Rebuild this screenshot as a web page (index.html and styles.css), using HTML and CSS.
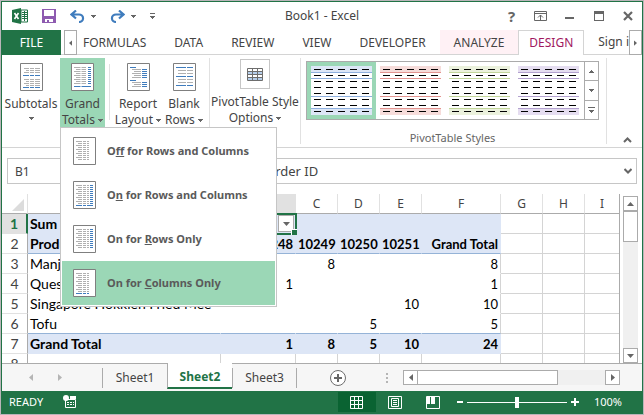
FILE: index.html
```html
<!DOCTYPE html>
<html lang="en">
<head>
    <meta charset="UTF-8">
    <meta name="viewport" content="width=device-width, initial-scale=1.0">
    <title>Book1 - Excel</title>
    <link rel="stylesheet" href="styles.css">
</head>
<body>

    <!-- shared icon shapes -->
    <svg class="defs" aria-hidden="true">
        <symbol id="swatch" viewBox="0 0 61 49">
            <path class="band" d="M0 0h61v6H0zM0 43h61v6H0z"/>
            <path class="rule" d="M0 6.500h61M0 12.500h61M0 30.500h61M0 42.500h61"/>
            <path class="dash" d="M3 3.500h58M3 9.500h58M3 15.500h58M3 21.500h58M3 27.500h58M3 33.500h58M3 39.500h58M3 45.500h58"/>
        </symbol>
        <symbol id="down" viewBox="0 0 5 3"><path d="M0 0h5v1H4v1H3v1H2V2H1V1H0z"/></symbol>
        <symbol id="left" viewBox="0 0 4 7"><path d="M4 0v7L0 3.500z"/></symbol>
        <symbol id="right" viewBox="0 0 4 7"><path d="M0 0v7l4-3.500z"/></symbol>
        <symbol id="page" viewBox="0 0 23 28"><path d="M.5.5h22v27H.5z" fill="#fff" stroke="#7f7f7f"/></symbol>
    </svg>

    <div class="window">
        <header class="titlebar">
            <div class="quick">
                <svg width="16" height="16" viewBox="0 0 16 16">
                    <path d="M9 2h6.500v12H9z" fill="#fff" stroke="#217346"/>
                    <path d="M10 4.500h5M10 6.500h5M10 8.500h5M10 10.500h5M12.500 3v10" stroke="#217346"/>
                    <path d="M0 2l9-2v16l-9-2z" fill="#217346"/>
                    <path d="M2.500 5l4 6M6.500 5l-4 6" stroke="#fff" stroke-width="1.600"/>
                </svg>
                <button class="icon" aria-label="Save">
                    <svg width="14" height="14" viewBox="0 0 14 14">
                        <path d="M0 0h14v14H0z" fill="#8e5bb0"/>
                        <path d="M2 1h10v6H2zM3 10h8v3H3z" fill="#fff"/>
                        <path d="M5 11h2v2H5z" fill="#8e5bb0"/>
                    </svg>
                </button>
                <button class="icon history" aria-label="Undo">
                    <svg width="15" height="13" viewBox="0 0 15 13"><path d="M6 .5L1.500 4.500 6 8.500M2 4.500h7a4 3.700 0 0 1 0 7.500" fill="none" stroke="#3f7cbd" stroke-width="2.200"/></svg>
                    <svg class="arrow" width="5" height="3"><use href="#down"/></svg>
                </button>
                <button class="icon history" aria-label="Redo">
                    <svg width="15" height="13" viewBox="0 0 15 13"><path d="M9 .5l4.500 4L9 8.500M13 4.500H6A4 3.700 0 0 0 6 12" fill="none" stroke="#3f7cbd" stroke-width="2.200"/></svg>
                    <svg class="arrow" width="5" height="3"><use href="#down"/></svg>
                </button>
                <button class="icon" aria-label="Customize">
                    <svg width="5" height="6" viewBox="0 0 5 6"><path d="M0 0h5v1H0zM0 3h5v1H4v1H3v1H2V5H1V4H0z"/></svg>
                </button>
            </div>
            <h1>Book1 - Excel</h1>
            <div class="controls">
                <button class="icon" aria-label="Help"><span class="help">?</span></button>
                <button class="icon" aria-label="Ribbon options">
                    <svg width="13" height="10" viewBox="0 0 13 10"><path d="M.5.5h12v9H.5zM.5 2.500h12M6.500 4v5M4 6.500L6.500 4 9 6.500" fill="none" stroke="#666"/></svg>
                </button>
                <button class="icon" aria-label="Minimize"><svg width="9" height="10" viewBox="0 0 9 10"><path d="M0 6h9v2H0z"/></svg></button>
                <button class="icon" aria-label="Maximize"><svg width="10" height="10" viewBox="0 0 10 10"><path d="M0 0h10v10H0zM1 3v6h8V3z" fill-rule="evenodd"/></svg></button>
                <button class="icon" aria-label="Close"><svg width="10" height="10" viewBox="0 0 10 10"><path d="M1 1l8 8M9 1L1 9" stroke="#666" stroke-width="2.200"/></svg></button>
            </div>
        </header>

        <nav class="tabs">
            <button class="file">FILE</button>
            <button class="tab-scroll" aria-label="Scroll tabs left"><svg width="3" height="6"><use href="#left"/></svg></button>
            <button class="tab">FORMULAS</button>
            <button class="tab">DATA</button>
            <button class="tab">REVIEW</button>
            <button class="tab">VIEW</button>
            <button class="tab">DEVELOPER</button>
            <button class="tab analyze">ANALYZE</button>
            <button class="tab design">DESIGN</button>
            <a class="signin" href="#">Sign in</a>
            <button class="tab-scroll" aria-label="Scroll tabs right"><svg width="3" height="6"><use href="#right"/></svg></button>
        </nav>

        <section class="ribbon">
            <div class="group layout">
                <button class="tool wide">
                    <svg width="23" height="28" viewBox="0 0 23 28"><use href="#page"/>
                        <path class="g" d="M4 5.500h16M6 7.500h14M4 9.500h16M4 16.500h16M6 18.500h14M4 20.500h16M6 22.500h14"/>
                        <path class="b" d="M3 12.500h17M3 24.500h17"/><path class="w" d="M9.500 4v21M14.500 4v21"/>
                    </svg>
                    <span>Subtotals</span>
                    <svg class="arrow" width="5" height="3"><use href="#down"/></svg>
                </button>
                <div class="dropdown">
                    <button class="tool open">
                        <svg width="23" height="28" viewBox="0 0 23 28"><use href="#page"/>
                            <path class="g" d="M3 4.500h12M5 6.500h10M3 8.500h12M5 10.500h10M3 12.500h12M5 14.500h10M3 16.500h12M5 18.500h10M3 20.500h12"/>
                            <path class="b" d="M3 23.500h17M17 4.500h3M17 6.500h3M17 8.500h3M17 10.500h3M17 12.500h3M17 14.500h3M17 16.500h3M17 18.500h3M17 20.500h3"/><path class="w" d="M10 3v22"/>
                        </svg>
                        <span>Grand<br>Totals <svg class="arrow" width="5" height="3"><use href="#down"/></svg></span>
                    </button>
                    <div class="menu">
                        <button>
                            <svg width="23" height="28" viewBox="0 0 23 28"><use href="#page"/>
                                <path class="g" d="M3 4.500h13M5 6.500h11M3 8.500h13M5 10.500h11M3 12.500h13M5 14.500h11M3 16.500h13M5 18.500h11M3 20.500h13M5 22.500h11"/><path class="w" d="M9.500 3v21M13.500 3v21"/>
                            </svg>
                            <span>O<u>f</u>f for Rows and Columns</span>
                        </button>
                        <button>
                            <svg width="23" height="28" viewBox="0 0 23 28"><use href="#page"/>
                                <path class="g" d="M3 4.500h13M5 6.500h11M3 8.500h13M5 10.500h11M3 12.500h13M5 14.500h11M3 16.500h13M5 18.500h11M3 20.500h13M5 22.500h11"/>
                                <path class="b" d="M3 24.500h17M17 4.500h3M17 6.500h3M17 8.500h3M17 10.500h3M17 12.500h3M17 14.500h3M17 16.500h3M17 18.500h3M17 20.500h3M17 22.500h3"/><path class="w" d="M9.500 3v22M13.500 3v22"/>
                            </svg>
                            <span>O<u>n</u> for Rows and Columns</span>
                        </button>
                        <button>
                            <svg width="23" height="28" viewBox="0 0 23 28"><use href="#page"/>
                                <path class="g" d="M3 4.500h13M5 6.500h11M3 8.500h13M5 10.500h11M3 12.500h13M5 14.500h11M3 16.500h13M5 18.500h11M3 20.500h13M5 22.500h11"/>
                                <path class="b" d="M17 4.500h3M17 6.500h3M17 8.500h3M17 10.500h3M17 12.500h3M17 14.500h3M17 16.500h3M17 18.500h3M17 20.500h3M17 22.500h3"/><path class="w" d="M9.500 3v21M13.500 3v21"/>
                            </svg>
                            <span>On for <u>R</u>ows Only</span>
                        </button>
                        <button class="current">
                            <svg width="23" height="28" viewBox="0 0 23 28"><use href="#page"/>
                                <path class="g" d="M3 4.500h13M5 6.500h11M3 8.500h13M5 10.500h11M3 12.500h13M5 14.500h11M3 16.500h13M5 18.500h11M3 20.500h13M5 22.500h11"/>
                                <path class="b" d="M3 24.500h13"/><path class="w" d="M9.500 3v22M13.500 3v22"/>
                            </svg>
                            <span>On for <u>C</u>olumns Only</span>
                        </button>
                    </div>
                </div>
                <i class="divider"></i>
                <button class="tool">
                    <svg width="23" height="28" viewBox="0 0 23 28"><use href="#page"/>
                        <path class="b" d="M3 4.500h6M3 17.500h6M15 6.500h5M15 8.500h5M15 10.500h5M15 12.500h5M15 14.500h5M15 19.500h5M15 21.500h5M15 23.500h5"/>
                        <path class="g" d="M5 6.500h9M7 8.500h7M5 10.500h9M7 12.500h7M5 14.500h9M5 19.500h9M7 21.500h7M5 23.500h9"/>
                    </svg>
                    <span>Report<br>Layout <svg class="arrow" width="5" height="3"><use href="#down"/></svg></span>
                </button>
                <button class="tool">
                    <svg width="23" height="28" viewBox="0 0 23 28"><use href="#page"/>
                        <path class="b" d="M3 4.500h17M3 13.500h17M3 22.500h17"/>
                        <path class="g" d="M5 7.500h15M5 10.500h15M5 16.500h15M5 19.500h15"/><path class="w" d="M13.500 3v21"/>
                    </svg>
                    <span>Blank<br>Rows <svg class="arrow" width="5" height="3"><use href="#down"/></svg></span>
                </button>
            </div>
            <div class="group options">
                <button class="tool">
                    <i class="tile"><svg width="16" height="13" viewBox="0 0 16 13">
                        <path d="M0 0h16v13H0z" fill="#fff"/><path d="M0 3h16v3H0zM0 9h16v3H0z" fill="#b4cdea"/>
                        <path d="M.5.5h15v12H.5zM0 3.500h16M0 6.500h16M0 9.500h16M5.500 0v13M10.500 0v13" fill="none" stroke="#6d6d6d"/>
                    </svg></i>
                    <span>PivotTable Style<br>Options <svg class="arrow" width="5" height="3"><use href="#down"/></svg></span>
                </button>
            </div>
            <div class="group styles">
                <div class="gallery">
                    <button class="style blue chosen" aria-label="Light blue"><svg width="61" height="49"><use href="#swatch"/></svg></button>
                    <button class="style red" aria-label="Light red"><svg width="61" height="49"><use href="#swatch"/></svg></button>
                    <button class="style green" aria-label="Light green"><svg width="61" height="49"><use href="#swatch"/></svg></button>
                    <button class="style purple" aria-label="Light purple"><svg width="61" height="49"><use href="#swatch"/></svg></button>
                    <div class="gallery-nav">
                        <button aria-label="Row up"><svg class="flip" width="5" height="3"><use href="#down"/></svg></button>
                        <button aria-label="Row down"><svg width="5" height="3"><use href="#down"/></svg></button>
                        <button aria-label="More styles"><svg width="7" height="6" viewBox="0 0 7 6"><path d="M0 0h7v1H0zM1 3h5v1H5v1H4v1H3V5H2V4H1z"/></svg></button>
                    </div>
                </div>
                <p>PivotTable Styles</p>
            </div>
            <button class="icon collapse" aria-label="Collapse ribbon"><svg width="9" height="6" viewBox="0 0 9 6"><path d="M1 5l3.500-3.500L8 5" fill="none" stroke="#666" stroke-width="2"/></svg></button>
        </section>

        <div class="formula">
            <input class="name-box" type="text" value="B1" aria-label="Name box">
            <div class="entry">
                <input type="text" value="Order ID" aria-label="Formula bar">
                <button class="icon" aria-label="Expand formula bar"><svg width="8" height="6" viewBox="0 0 8 6"><path d="M.5 1L4 4.500 7.500 1" fill="none" stroke="#666" stroke-width="2"/></svg></button>
            </div>
        </div>

        <main class="sheet">
            <div class="grid">
                <table>
                    <colgroup><col class="c-num"><col class="c-a"><col class="c-b"><col class="c-n"><col class="c-n"><col class="c-n"><col class="c-f"><col class="c-n"><col class="c-n"><col></colgroup>
                    <thead>
                        <tr><th class="corner"><svg width="12" height="12" viewBox="0 0 12 12"><path d="M12 0v12H0z" fill="#dcdcdc"/></svg></th><th>A</th><th class="on">B</th><th>C</th><th>D</th><th>E</th><th>F</th><th>G</th><th>H</th><th>I</th></tr>
                    </thead>
                    <tbody>
                        <tr class="pivot"><th class="on">1</th><td>Sum of Quantity</td><td class="active">Order ID<button class="filter" aria-label="Filter"><svg width="7" height="4" viewBox="0 0 7 4"><path d="M0 0h7L3.500 4z"/></svg></button></td><td></td><td></td><td></td><td></td><td></td><td></td><td></td></tr>
                        <tr class="pivot line"><th>2</th><td>Product</td><td>10248</td><td>10249</td><td>10250</td><td>10251</td><td>Grand Total</td><td></td><td></td><td></td></tr>
                        <tr><th>3</th><td>Manjimup Dried Apples</td><td></td><td>8</td><td></td><td></td><td>8</td><td></td><td></td><td></td></tr>
                        <tr><th>4</th><td>Queso Cabrales</td><td>1</td><td></td><td></td><td></td><td>1</td><td></td><td></td><td></td></tr>
                        <tr><th>5</th><td>Singapore Hokkien Fried Mee</td><td></td><td></td><td></td><td>10</td><td>10</td><td></td><td></td><td></td></tr>
                        <tr class="line"><th>6</th><td>Tofu</td><td></td><td></td><td>5</td><td></td><td>5</td><td></td><td></td><td></td></tr>
                        <tr class="pivot"><th>7</th><td>Grand Total</td><td>1</td><td>8</td><td>5</td><td>10</td><td>24</td><td></td><td></td><td></td></tr>
                        <tr class="blank"><th>8</th><td></td><td></td><td></td><td></td><td></td><td></td><td></td><td></td><td></td></tr>
                    </tbody>
                </table>
            </div>
            <div class="vscroll">
                <button aria-label="Scroll up"><svg class="flip" width="7" height="4" viewBox="0 0 7 4"><path d="M0 0h7L3.500 4z"/></svg></button>
                <i class="thumb"></i>
                <button class="end" aria-label="Scroll down"><svg width="7" height="4" viewBox="0 0 7 4"><path d="M0 0h7L3.500 4z"/></svg></button>
            </div>
        </main>

        <div class="sheetbar">
            <div class="sheet-nav">
                <button class="icon" aria-label="Previous sheet"><svg width="4" height="7"><use href="#left"/></svg></button>
                <button class="icon" aria-label="Next sheet"><svg width="4" height="7"><use href="#right"/></svg></button>
            </div>
            <button class="sheet-tab">Sheet1</button>
            <button class="sheet-tab selected">Sheet2</button>
            <button class="sheet-tab last">Sheet3</button>
            <button class="icon add" aria-label="New sheet"><svg width="16" height="16" viewBox="0 0 16 16"><circle cx="8" cy="8" r="7.500" fill="#fff" stroke="#6d6d6d"/><path d="M7 4h2v3h3v2H9v3H7V9H4V7h3z"/></svg></button>
            <svg class="grip" width="2" height="10" viewBox="0 0 2 10"><path d="M0 0h2v2H0zM0 4h2v2H0zM0 8h2v2H0z" fill="#b5b5b5"/></svg>
            <div class="hscroll">
                <button aria-label="Scroll left"><svg width="4" height="7"><use href="#left"/></svg></button>
                <i class="thumb"></i>
                <button class="end" aria-label="Scroll right"><svg width="4" height="7"><use href="#right"/></svg></button>
            </div>
        </div>

        <footer class="status">
            <span>READY</span>
            <button class="icon macro" aria-label="Record macro"><svg width="14" height="14" viewBox="0 0 14 14"><path d="M2.500 4.500h10v8h-10z" fill="none" stroke="#fff"/><path d="M7 1h6v3H7z" fill="#fff"/><path d="M4 7.500h7M4 9.500h7" stroke="#fff" stroke-dasharray="2 1"/><circle cx="3" cy="3" r="3" fill="#fff"/></svg></button>
            <div class="views">
                <button class="on" aria-label="Normal"><svg width="13" height="13" viewBox="0 0 13 13"><path d="M.5.5h12v12H.5zM4.500 0v13M8.500 0v13M0 4.500h13M0 8.500h13" fill="none" stroke="#fff"/></svg></button>
                <button aria-label="Page layout"><svg width="14" height="13" viewBox="0 0 14 13"><path d="M.5.5h13v12H.5zM3.500 2.500h7v8h-7zM5 4.500h4M5 6.500h4M5 8.500h4" fill="none" stroke="#fff"/></svg></button>
                <button aria-label="Page break"><svg width="14" height="13" viewBox="0 0 14 13"><path d="M.5.5h13v12H.5z" fill="none" stroke="#fff"/><path d="M1 1h3v7H1zM5 1h4v7H5z" fill="#fff"/></svg></button>
            </div>
            <div class="zoom">
                <button aria-label="Zoom out"><svg width="6" height="2"><path d="M0 0h6v2H0z" fill="#fff"/></svg></button>
                <input type="range" min="0" max="100" value="50" aria-label="Zoom">
                <button aria-label="Zoom in"><svg width="8" height="8"><path d="M0 3h8v2H0zM3 0h2v8H3z" fill="#fff"/></svg></button>
            </div>
            <span class="percent">100%</span>
        </footer>
    </div>

</body>
</html>
```
FILE: styles.css
```css
* {
    box-sizing: border-box;
}

body {
    margin: 0;
    padding: 1px;
    height: 100vh;
    background-color: #b9b5b9;
    font-family: "Noto Sans", "Open Sans", sans-serif;
    font-size: 12px;
    line-height: 16px;
    color: #444444;
    display: flex;
}

button,
input {
    font: inherit;
    color: inherit;
    background: none;
    border: none;
    border-radius: 0;
    margin: 0;
    padding: 0;
    min-width: 0;
}

svg {
    display: block;
    flex-shrink: 0;
    fill: #666666;
}

.defs {
    position: absolute;
    width: 0;
    height: 0;
}

.window {
    flex: 1;
    min-width: 0;
    display: flex;
    flex-direction: column;
    background-color: #ffffff;
    border: 1px solid #217346;
}

.icon {
    display: flex;
    align-items: center;
    justify-content: center;
}

.arrow {
    display: inline-block;
    vertical-align: middle;
}

.flip {
    transform: rotate(180deg);
}

/* title bar */
.titlebar {
    display: grid;
    grid-template-columns: 1fr auto 1fr;
    align-items: center;
    height: 28px;
}

.titlebar h1 {
    margin: 0;
    font-size: 12px;
    font-weight: normal;
}

.quick {
    display: flex;
    align-items: center;
    gap: 14px;
    padding-left: 10px;
}

.history {
    gap: 6px;
}

.controls {
    display: flex;
    justify-content: flex-end;
}

.controls .icon {
    width: 29px;
    height: 24px;
}

.help {
    font-size: 15px;
    font-weight: bold;
    color: #666666;
}

/* ribbon tabs */
.tabs {
    display: flex;
    height: 25px;
    box-shadow: inset 0 -1px #d4d4d4;
}

.file {
    width: 59px;
    background-color: #217346;
    color: #ffffff;
    margin-right: 3px;
}

.tab {
    padding: 0 14px;
}

.tab-scroll {
    width: 13px;
    flex-shrink: 0;
    background-color: #ffffff;
    border: 1px solid #ababab;
    display: flex;
    align-items: center;
    justify-content: center;
}

.tab-scroll + .tab {
    padding-left: 6px;
}

.analyze {
    padding-top: 1px;
    background-color: #fff1f5;
    border-bottom: 1px solid #d4d4d4;
}

.tab.design {
    padding: 0 10px;
    color: #a0185f;
    background-color: #ffffff;
    border: 1px solid #d4d4d4;
    border-bottom: none;
}

.signin {
    flex: 1;
    min-width: 0;
    overflow: hidden;
    white-space: nowrap;
    padding: 4px 0 0 14px;
    color: inherit;
    text-decoration: none;
}

/* ribbon */
.ribbon {
    display: flex;
    height: 93px;
    padding-top: 3px;
    border-bottom: 1px solid #d4d4d4;
}

.group {
    display: flex;
    height: 86px;
    border-right: 1px solid #e1e1e1;
}

.tool {
    display: flex;
    flex-direction: column;
    align-items: center;
    width: 46px;
    height: 69px;
    padding-top: 5px;
    white-space: nowrap;
    gap: 5px;
}

.wide {
    width: 58px;
}

.tool.open {
    width: 45px;
    background-color: #9bd7b6;
}

.g { stroke: #b0b0b0; }
.b { stroke: #3f7cbd; }
.w { stroke: #ffffff; }

.divider {
    width: 1px;
    height: 56px;
    margin: 6px 5px 0 4px;
    background-color: #e1e1e1;
}

.layout {
    width: 208px;
}

.options .tool {
    width: 90px;
    padding-top: 1px;
    gap: 5px;
}

.tile {
    display: flex;
    align-items: center;
    justify-content: center;
    width: 30px;
    height: 30px;
    border: 1px solid #c6c6c6;
}

.styles {
    flex-direction: column;
    padding: 3px 7px 0 5px;
}

.styles p {
    margin: 0;
    padding-top: 11px;
    font-size: 11px;
    line-height: 14px;
    text-align: center;
    color: #666666;
}

.gallery {
    display: flex;
    height: 60px;
    border: 1px solid #ababab;
}

.style {
    display: flex;
    padding: 4px;
    color: #ffffff;
}

.chosen {
    background-color: #9bd7b6;
}

.style svg {
    background-color: #ffffff;
}

.band { fill: var(--band); }
.rule { stroke: var(--rule); }

.dash {
    stroke: #000000;
    stroke-dasharray: 7 5;
}

.blue { --band: #dce6f6; --rule: #8fb0de; }
.red { --band: #f6dcda; --rule: #e39490; }
.green { --band: #ebf1dc; --rule: #c2d69a; }
.purple { --band: #e5ddf0; --rule: #b3a2cf; }

.gallery-nav {
    display: flex;
    flex-direction: column;
    width: 14px;
    margin-left: 1px;
    border-left: 1px solid #ababab;
}

.gallery-nav button {
    flex: 1;
    display: flex;
    align-items: center;
    justify-content: center;
}

.gallery-nav button + button {
    border-top: 1px solid #ababab;
}

.collapse {
    margin: auto 10px 4px auto;
}

/* grand totals menu */
.dropdown {
    position: relative;
}

.menu {
    position: absolute;
    top: 100%;
    left: 0;
    margin-top: -17px;
    z-index: 2;
    width: 217px;
    padding: 1px;
    background-color: #ffffff;
    border: 1px solid #c6c6c6;
}

.menu button {
    display: flex;
    align-items: center;
    gap: 11px;
    width: 100%;
    height: 44px;
    padding-left: 11px;
    font-size: 11px;
    font-weight: bold;
    color: #5a5a5a;
    white-space: nowrap;
}

.menu .current {
    background-color: #9bd7b6;
}

/* formula bar */
.formula {
    display: flex;
    gap: 8px;
    padding: 10px 5px 0;
}

.name-box {
    width: 120px;
    height: 26px;
    padding-left: 7px;
    border: 1px solid #c6c6c6;
}

.entry {
    flex: 1;
    display: flex;
    height: 26px;
    margin-left: 100px;
    padding: 0 4px 0 29px;
    border: 1px solid #c6c6c6;
}

.entry input {
    flex: 1;
    font-size: 13px;
}

/* sheet */
.sheet {
    display: flex;
    flex: 1;
    min-height: 0;
    padding: 10px 4px 0 0;
    gap: 3px;
}

.grid {
    flex: 1;
    min-width: 0;
    overflow: hidden;
    border-right: 1px solid #ababab;
    font-family: Lato, "Liberation Sans", sans-serif;
}

table {
    width: 100%;
    table-layout: fixed;
    border-collapse: separate;
    border-spacing: 0;
    color: #000000;
    font-size: 13px;
}

.c-num { width: 26px; }
.c-a { width: 193px; }
.c-b { width: 75px; }
.c-n { width: 42px; }
.c-f { width: 79px; }

th,
td {
    height: 20px;
    padding: 0 2px;
    line-height: 18px;
    white-space: nowrap;
    border-right: 1px solid #d4d4d4;
    border-bottom: 1px solid #d4d4d4;
}

th {
    font-weight: normal;
    color: #444444;
    padding: 0;
}

thead th {
    font-family: "Noto Sans", sans-serif;
    font-size: 12px;
    border-right-color: #e1e1e1;
    border-bottom-color: #ababab;
}

.corner svg {
    margin: 2px 0 0 10px;
}

tbody th {
    font-size: 14px;
    border-right-color: #ababab;
    border-bottom-color: #e1e1e1;
}

td {
    text-align: right;
}

td:nth-child(2) {
    text-align: left;
    font-size: 14px;
}

tr > :last-child {
    border-right: none;
}

th.on {
    background-color: #e1e1e1;
    color: #217346;
}

tbody th.on {
    font-weight: bold;
    border-right: 2px solid #217346;
}

.pivot td:nth-child(-n+7) {
    background-color: #dde6f6;
    border-color: #dde6f6;
    font-weight: bold;
}

.line td:nth-child(-n+7) {
    border-bottom-color: #95b3d7;
}

tbody tr:not(.pivot):not(.blank) td:nth-child(-n+6) {
    border-right-color: #ffffff;
}

tbody tr:not(.pivot):not(.line):not(.blank) td:nth-child(-n+7) {
    border-bottom-color: #ffffff;
}

.pivot .active {
    position: relative;
    text-align: left;
    outline: 2px solid #217346;
    outline-offset: -1px;
}

.active::after {
    content: "";
    position: absolute;
    right: -2px;
    bottom: -2px;
    width: 5px;
    height: 5px;
    background-color: #217346;
    border: solid #ffffff;
    border-width: 1px 0 0 1px;
}

.filter {
    position: absolute;
    right: 1px;
    top: 1px;
    width: 16px;
    height: 17px;
    display: flex;
    align-items: center;
    justify-content: center;
    background-color: #ffffff;
    border: 1px solid #ababab;
}

/* scroll bars */
.vscroll {
    display: flex;
    flex-direction: column;
    width: 15px;
    margin-top: 2px;
    background-color: #f0f0f0;
}

.hscroll {
    display: flex;
    flex: 1;
    height: 15px;
    background-color: #f0f0f0;
}

.vscroll button,
.hscroll button,
.thumb {
    display: flex;
    align-items: center;
    justify-content: center;
    width: 15px;
    height: 15px;
    background-color: #ffffff;
    border: 1px solid #ababab;
}

.vscroll .thumb {
    height: 31px;
}

.vscroll .end {
    margin-top: auto;
}

.hscroll .thumb {
    width: 65%;
    margin-left: -1px;
}

.hscroll .end {
    margin-left: auto;
}

/* sheet tabs */
.sheetbar {
    display: flex;
    align-items: center;
    height: 28px;
    padding-right: 22px;
    background-color: #f6f6f6;
    border-top: 1px solid #ababab;
}

.sheet-nav {
    display: flex;
    gap: 25px;
    width: 100px;
    padding-left: 27px;
}

.sheet-nav svg {
    fill: #b5b5b5;
}

.sheet-tab {
    width: 65px;
    height: 20px;
    border-left: 1px solid #ababab;
}

.sheet-tab.selected {
    align-self: flex-start;
    height: 26px;
    margin-top: -1px;
    padding-top: 4px;
    background-color: #ffffff;
    border-bottom: 2px solid #217346;
    color: #217346;
    font-weight: bold;
}

.sheet-tab.last {
    border-right: 1px solid #ababab;
}

.add {
    margin-left: 33px;
}

.grip {
    margin: 0 15px 0 40px;
}

/* status bar */
.status {
    display: flex;
    align-items: center;
    height: 22px;
    padding: 0 20px 0 7px;
    background-color: #217346;
    color: #ffffff;
    font-size: 11px;
}

.macro {
    margin-left: 20px;
}

.views {
    display: flex;
    margin-left: auto;
}

.views button {
    display: flex;
    align-items: center;
    justify-content: center;
    width: 38px;
    height: 20px;
}

.views .on {
    background-color: #0a6332;
}

.zoom {
    display: flex;
    align-items: center;
    gap: 4px;
    margin-left: 5px;
}

.zoom input {
    appearance: none;
    width: 100px;
    height: 12px;
    background: linear-gradient(#ffffff, #ffffff) center / 100% 1px no-repeat;
}

.zoom input::-webkit-slider-thumb {
    appearance: none;
    width: 4px;
    height: 11px;
    background-color: #ffffff;
}

.percent {
    margin-left: 15px;
}
```
